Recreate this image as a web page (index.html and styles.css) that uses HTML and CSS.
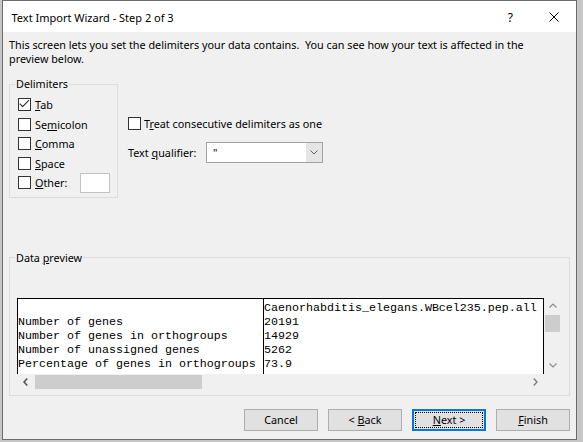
FILE: index.html
```html
<!DOCTYPE html>
<html>
<head>
<meta charset="utf-8">
<title>Text Import Wizard - Step 2 of 3</title>
<link rel="stylesheet" href="styles.css">
</head>
<body>
<div class="window">
  <header class="titlebar">
    <span class="title">Text Import Wizard - Step 2 of 3</span>
    <span class="help">?</span>
    <svg class="close" width="10" height="10" viewBox="0 0 10 10"><path d="M0.5 0.5L9.5 9.5M9.5 0.5L0.5 9.5" stroke="#000" stroke-width="1" fill="none"/></svg>
  </header>
  <main class="content">
    <p class="intro">This screen lets you set the delimiters your data contains.&nbsp; You can see how your text is affected in the<br>preview below.</p>

    <div class="options">
      <fieldset class="group delims">
        <legend>Delimiters</legend>
        <div class="delims-body">
          <div class="check-row">
            <span class="box"><svg width="11" height="11" viewBox="0 0 11 11"><path d="M0.8 4.6L3.6 7.6L10 1.2" stroke="#333" stroke-width="1.2" fill="none"/></svg></span>
            <span><u>T</u>ab</span>
          </div>
          <div class="check-row"><span class="box"></span><span>Se<u>m</u>icolon</span></div>
          <div class="check-row"><span class="box"></span><span><u>C</u>omma</span></div>
          <div class="check-row"><span class="box"></span><span><u>S</u>pace</span></div>
          <div class="check-row"><span class="box"></span><span><u>O</u>ther:</span><span class="textbox"></span></div>
        </div>
      </fieldset>

      <div class="side">
        <div class="check-row treat"><span class="box"></span><span>T<u>r</u>eat consecutive delimiters as one</span></div>
        <div class="qual-row">
          <span class="qual-label">Text <u>q</u>ualifier:</span>
          <div class="select">
            <span class="select-value">"</span>
            <span class="select-btn"><svg width="8" height="5" viewBox="0 0 8 5"><path d="M0.5 0.5L4 4L7.5 0.5" stroke="#606060" stroke-width="1" fill="none"/></svg></span>
          </div>
        </div>
      </div>
    </div>

    <fieldset class="group preview">
      <legend>Data <u>p</u>review</legend>
      <div class="preview-body">
        <div class="grid">
          <div class="cells">
            <div class="col c1">
              <div class="cell">&nbsp;</div>
              <div class="cell">Number of genes</div>
              <div class="cell">Number of genes in orthogroups</div>
              <div class="cell">Number of unassigned genes</div>
              <div class="cell">Percentage of genes in orthogroups</div>
            </div>
            <div class="col c2">
              <div class="cell">Caenorhabditis_elegans.WBcel235.pep.all</div>
              <div class="cell">20191</div>
              <div class="cell">14929</div>
              <div class="cell">5262</div>
              <div class="cell">73.9</div>
            </div>
          </div>
          <div class="vscroll">
            <span class="arrow-v"><svg width="8" height="5" viewBox="0 0 8 5"><path d="M0.5 4.5L4 1L7.5 4.5" stroke="#8a8a8a" stroke-width="1.1" fill="none"/></svg></span>
            <span class="vthumb"></span>
            <span class="spacer"></span>
            <span class="arrow-v"><svg width="8" height="5" viewBox="0 0 8 5"><path d="M0.5 0.5L4 4L7.5 0.5" stroke="#8a8a8a" stroke-width="1.1" fill="none"/></svg></span>
          </div>
          <div class="hscroll">
            <span class="arrow-h"><svg width="5" height="8" viewBox="0 0 5 8"><path d="M4.3 0.5L1 4L4.3 7.5" stroke="#505050" stroke-width="1.5" fill="none"/></svg></span>
            <span class="hthumb"></span>
            <span class="spacer"></span>
            <span class="arrow-h"><svg width="5" height="8" viewBox="0 0 5 8"><path d="M0.7 0.5L4 4L0.7 7.5" stroke="#7a7a7a" stroke-width="1.3" fill="none"/></svg></span>
          </div>
          <div class="corner"></div>
        </div>
      </div>
    </fieldset>

    <div class="buttons">
      <button class="btn">Cancel</button>
      <button class="btn">&lt;&nbsp;<u>B</u>ack</button>
      <button class="btn btn-default"><span class="focus"><u>N</u>ext&nbsp;&gt;</span></button>
      <button class="btn"><u>F</u>inish</button>
    </div>
  </main>
</div>
</body>
</html>
```

FILE: styles.css
```css
* { box-sizing: border-box; }
html, body { margin: 0; padding: 0; }
body {
  width: 583px;
  height: 442px;
  overflow: hidden;
  background: #c6c6c6;
  font-family: "Noto Sans", "DejaVu Sans", sans-serif;
  font-size: 10.8px;
  color: #000;
}
.window {
  margin-left: 2px;
  width: 575px;
  border: 1px solid #6c6c6c;
  background: #f0f0f0;
  display: flex;
  flex-direction: column;
}
.titlebar {
  height: 31px;
  background: #fff;
  display: flex;
  align-items: center;
  padding-left: 8.5px;
  font-size: 11px;
}
.title { flex: 1; padding-top: 1px; }
.help { font-size: 12px; margin-right: 36px; padding-top: 1px; }
.close { margin-right: 17px; display: block; }

.content {
  padding: 6px 6px 8px;
  display: flex;
  flex-direction: column;
}
.intro { margin: 0; line-height: 14px; }

.options {
  display: flex;
  align-items: flex-start;
  margin-top: 11.3px;
}
.group {
  margin: 0;
  padding: 0;
  border: 1px solid #dcdcdc;
  min-width: 0;
}
.group legend {
  padding: 0 1px;
  margin-left: 5px;
  line-height: 14px;
}
.delims { width: 109px; flex: none; }
.delims-body { padding: 3.8px 0 4.4px 8px; }
.check-row {
  height: 19.5px;
  display: flex;
  align-items: center;
  gap: 4px;
  white-space: nowrap;
}
.box {
  width: 13px;
  height: 13px;
  border: 1px solid #333;
  background: #fff;
  flex: none;
  display: block;
}
.box svg { display: block; }
.textbox {
  width: 30px;
  height: 20px;
  border: 1px solid #c2c2c2;
  background: #fff;
  margin-left: auto;
  margin-right: 7px;
}

.side { margin-left: 10px; padding-top: 39.7px; }
.check-row.treat { height: 13px; gap: 3px; }
.qual-row {
  margin-top: 12px;
  height: 21px;
  display: flex;
  align-items: center;
}
.qual-label { width: 78px; }
.select {
  width: 117px;
  height: 21px;
  border: 1px solid #a2a2a2;
  background: #fff;
  display: flex;
}
.select-value { flex: 1; padding-left: 6px; line-height: 19px; }
.select-btn {
  width: 16px;
  background: #e5e5e5;
  display: flex;
  align-items: center;
  justify-content: center;
}
.select-btn svg { display: block; }

.preview { margin-top: 53px; }
.preview-body { padding: 33px 7px 4px 7px; }
.grid {
  display: grid;
  grid-template-columns: 527px 17px;
  grid-template-rows: 76px 17px;
}
.cells {
  border: 1px solid #000;
  border-bottom: none;
  background: #fff;
  display: flex;
  font-family: "Liberation Mono", "Courier New", monospace;
  font-size: 11.67px;
  line-height: 14px;
  overflow: hidden;
}
.col { padding-top: 2px; }
.c1 { width: 246px; border-right: 1px solid #000; flex: none; }
.c2 { flex: 1; }
.cell { height: 14px; white-space: pre; }

.vscroll {
  display: flex;
  flex-direction: column;
  align-items: center;
}
.arrow-v {
  height: 16px;
  width: 17px;
  display: flex;
  align-items: center;
  justify-content: center;
  flex: none;
}
.arrow-v svg, .arrow-h svg { display: block; }
.vthumb {
  width: 15px;
  height: 17px;
  margin-top: 1px;
  background: #cdcdcd;
  flex: none;
}
.spacer { flex: 1; }
.hscroll {
  display: flex;
  align-items: flex-start;
}
.arrow-h {
  width: 17px;
  height: 16px;
  display: flex;
  align-items: center;
  justify-content: center;
  flex: none;
}
.hthumb {
  width: 167px;
  height: 14px;
  margin-top: 1px;
  margin-left: 1px;
  background: #cdcdcd;
  flex: none;
}
.corner { background: #f0f0f0; }

.buttons {
  margin-top: 13px;
  display: flex;
  justify-content: flex-end;
  gap: 10px;
}
.btn {
  width: 74px;
  height: 22px;
  margin: 0;
  padding: 0;
  border: 1px solid #adadad;
  background: #e1e1e1;
  font-family: inherit;
  font-size: 10.8px;
  line-height: 20px;
  color: #000;
  text-align: center;
  display: block;
}
.btn-default {
  border: 2px solid #0078d7;
  padding: 1px;
  line-height: 14px;
}
.focus {
  display: block;
  height: 16px;
  border: 1px dotted #000;
  text-align: center;
}
```
